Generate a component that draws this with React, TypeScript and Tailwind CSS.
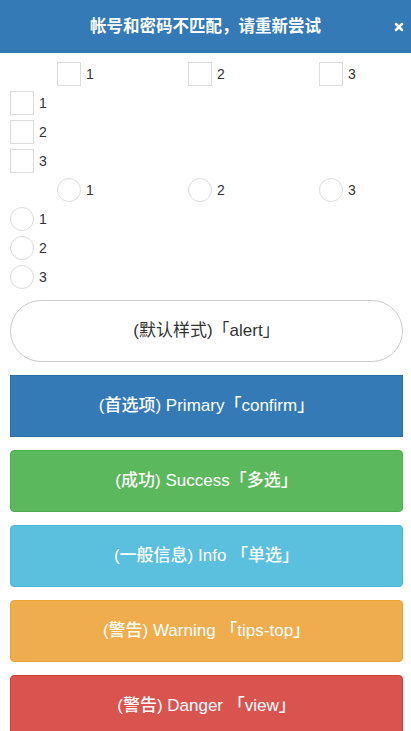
import { X } from "lucide-react";

const font = { fontFamily: '"Liberation Sans", "Noto Sans CJK SC", sans-serif' };

const Box = ({ round = false }: { round?: boolean }) => (
  <span
    className={
      "inline-block w-[24px] h-[24px] border border-[#dcdcdc] bg-white shrink-0 " +
      (round ? "rounded-full" : "")
    }
  />
);

const Item = ({ label, round }: { label: string; round?: boolean }) => (
  <label className="flex items-center gap-[5px] h-[24px] text-[14px] text-[#333]">
    <Box round={round} />
    <span>{label}</span>
  </label>
);

const buttons = [
  { text: "(首选项) Primary「confirm」", cls: "bg-[#337ab7] border-[#2e6da4]" },
  { text: "(成功) Success「多选」", cls: "bg-[#5cb85c] border-[#4cae4c] rounded-[4px]" },
  { text: "(一般信息) Info 「单选」", cls: "bg-[#5bc0de] border-[#46b8da] rounded-[4px]" },
  { text: "(警告) Warning 「tips-top」", cls: "bg-[#f0ad4e] border-[#eea236] rounded-[4px]" },
  { text: "(警告) Danger 「view」", cls: "bg-[#d9534f] border-[#d43f3a] rounded-[4px]" },
];

export default function App() {
  const nums = ["1", "2", "3"];
  return (
    <div className="w-[411px] h-[731px] overflow-hidden bg-white" style={font}>
      <div className="relative h-[53px] bg-[#337ab7] flex items-center justify-center text-white text-[16.5px] font-semibold">
        帐号和密码不匹配，请重新尝试
        <X className="absolute right-[6px] top-[21px] w-[12px] h-[12px]" strokeWidth={5} />
      </div>

      <div className="flex flex-col gap-[5px] pt-[9px] pl-[10px] pr-[8px]">
        <div className="grid grid-cols-3">
          {nums.map((n) => (
            <div key={n} className="pl-[47px]">
              <Item label={n} />
            </div>
          ))}
        </div>
        {nums.map((n) => (
          <Item key={n} label={n} />
        ))}
        <div className="grid grid-cols-3">
          {nums.map((n) => (
            <div key={n} className="pl-[47px]">
              <Item label={n} round />
            </div>
          ))}
        </div>
        {nums.map((n) => (
          <Item key={n} label={n} round />
        ))}
      </div>

      <div className="flex flex-col gap-[13px] pl-[10px] pr-[8px] pt-[11px]">
        <button className="h-[62px] w-full rounded-full border border-[#cccccc] bg-white text-[17px] text-[#333]">
          (默认样式)「alert」
        </button>
        {buttons.map((b) => (
          <button
            key={b.text}
            className={"h-[62px] w-full border text-white text-[17px] font-medium " + b.cls}
          >
            {b.text}
          </button>
        ))}
      </div>
    </div>
  );
}
